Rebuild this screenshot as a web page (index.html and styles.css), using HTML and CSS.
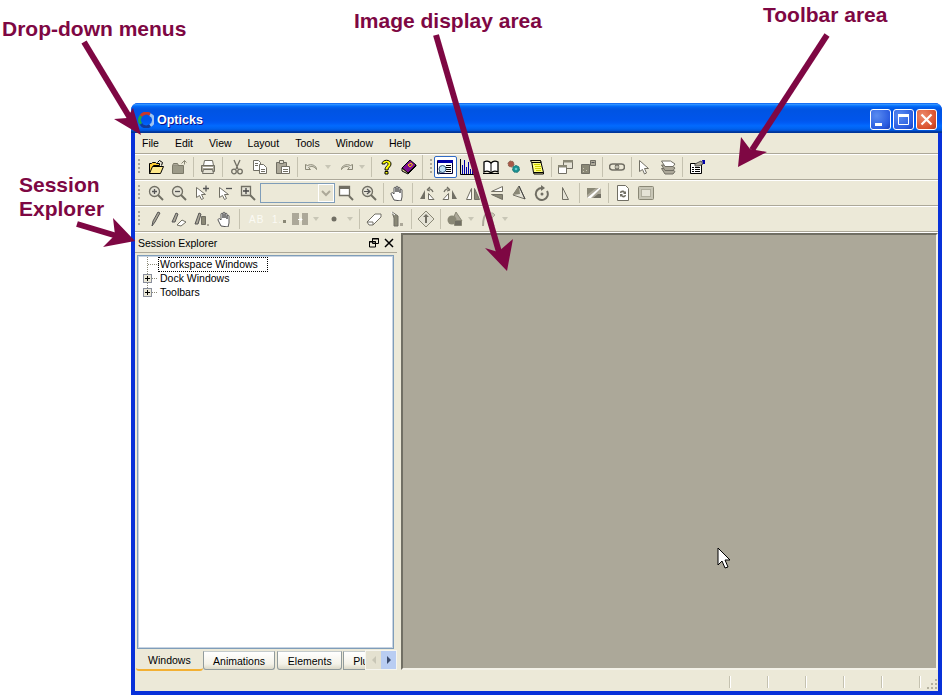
FILE: index.html
```html
<!DOCTYPE html>
<html lang="en">
<head>
    <meta charset="UTF-8">
    <title>Opticks</title>
    <link rel="stylesheet" href="styles.css">
</head>
<body>
    <!-- icon set -->
    <svg class="defs" width="0" height="0">
        <symbol id="i-open" viewBox="0 0 16 16"><path d="M1.500 14.500v-10h2l1-1h3l1 1h3v2h-6l-2 8z" fill="#fc3" stroke="#000"/><path d="M1.500 14.500l3-7h11l-3 7z" fill="#ffe98a" stroke="#000"/><path d="M9.500 3.500l2-2 3 2-1 3" fill="none" stroke="#000"/></symbol>
        <symbol id="i-folder" viewBox="0 0 16 16"><path d="M1.500 6.500h11v8h-11z" fill="#9c9a88" stroke="#7b7968"/><path d="M1.500 6.500l1-2h4l1 2" fill="#aca899" stroke="#7b7968"/><path d="M10.500 4.500l3-3 2 2M13.500 1.500v4" fill="none" stroke="#8a8876"/></symbol>
        <symbol id="i-print" viewBox="0 0 16 16"><path d="M4.500 1.500h8l1 5h-10z" fill="#fff" stroke="#716f64"/><path d="M1.500 6.500h13v6h-13z" fill="#aca899" stroke="#716f64"/><path d="M3.500 10.500l-1 4h11l-1-4z" fill="#e5e3d6" stroke="#716f64"/><path d="M3 8.500h10" stroke="#fff"/></symbol>
        <symbol id="i-cut" viewBox="0 0 16 16"><path d="M5 1l4 9M11 1l-4 9" stroke="#716f64" stroke-width="1.300" fill="none"/><circle cx="5" cy="12.500" r="2.300" fill="none" stroke="#716f64" stroke-width="1.300"/><circle cx="11" cy="12.500" r="2.300" fill="none" stroke="#716f64" stroke-width="1.300"/></symbol>
        <symbol id="i-copy" viewBox="0 0 16 16"><path d="M1.500 1.500h5l2 2v8h-7z" fill="#fff" stroke="#716f64"/><path d="M7.500 5.500h4l3 3v6h-7z" fill="#fff" stroke="#716f64"/><path d="M3 4.500h3M3 6.500h3M9 10.500h4M9 12.500h4" stroke="#716f64"/></symbol>
        <symbol id="i-paste" viewBox="0 0 16 16"><path d="M1.500 3.500h10v11h-10z" fill="#aca899" stroke="#716f64"/><path d="M4.500 1.500h4v3h-4z" fill="#e5e3d6" stroke="#716f64"/><path d="M6.500 7.500h8v7h-8z" fill="#fff" stroke="#716f64"/><path d="M8 10.500h5M8 12.500h5" stroke="#716f64"/></symbol>
        <symbol id="i-undo" viewBox="0 0 16 16"><path d="M1.500 5.500v5h5l-2-2c3-2 6-1 8 2 0-4-5-6-9-4z" fill="#e5e3d6" stroke="#8a8876"/></symbol>
        <symbol id="i-redo" viewBox="0 0 16 16"><path d="M14.500 5.500v5h-5l2-2c-3-2-6-1-8 2 0-4 5-6 9-4z" fill="#e5e3d6" stroke="#8a8876"/></symbol>
        <symbol id="i-help" viewBox="0 0 16 16"><path d="M4 5c0-5 9-5 9 0 0 3-3 3-3 6H7c0-4 3-4 3-6s-3-2-3 0z" fill="#ff0" stroke="#000"/><path d="M7 12.500h3v2.500H7z" fill="#ff0" stroke="#000"/></symbol>
        <symbol id="i-book" viewBox="0 0 16 16"><path d="M1 9l8-8 6 5-8 8z" fill="#7c1090" stroke="#000"/><path d="M1 9v3l6 3 8-8V6l-8 8z" fill="#e8d8a0" stroke="#000"/><path d="M7 6l3-2 1.500 2-2.500 2z" fill="none" stroke="#fc0"/></symbol>
        <symbol id="i-window" viewBox="0 0 16 16"><path d="M.5 1.500h15v13H.5z" fill="#fff" stroke="#003"/><path d="M1 1h15v3H1z" fill="#00a"/><path d="M9 6.500h5M9 8.500h5M9 10.500h5M9 12.500h5" stroke="#000"/><circle cx="5.500" cy="10" r="3.500" fill="#bfe0f5" stroke="#357"/><path d="M3 13l-2 2" stroke="#357" stroke-width="2"/></symbol>
        <symbol id="i-hist" viewBox="0 0 16 16"><path d="M.5 0v15.500H16" fill="none" stroke="#000"/><path d="M2.500 15V6M4.500 15V1M6.500 15V8M8.500 15V3M10.500 15V10M12.500 15V7M14.500 15v-4" stroke="#00a"/></symbol>
        <symbol id="i-obook" viewBox="0 0 16 16"><path d="M8 4C6 2 3 2 1 3v10c2-1 5-1 7 1 2-2 5-2 7-1V3c-2-1-5-1-7 1z" fill="#fff" stroke="#000" stroke-width="1.300"/><path d="M8 4v10M0 14.500h16" stroke="#000"/></symbol>
        <symbol id="i-gears" viewBox="0 0 16 16"><circle cx="5" cy="5" r="3" fill="#a85848" stroke="#865" stroke-dasharray="2 1"/><circle cx="10" cy="10" r="3.500" fill="#189090" stroke="#377" stroke-dasharray="2 1"/><circle cx="10" cy="10" r="1.300" fill="#6cc"/></symbol>
        <symbol id="i-scroll" viewBox="0 0 16 16"><path d="M2.500 1.500h9l3 12h-10z" fill="#ffff80" stroke="#000"/><path d="M1.500 1.500h10l.5 2h-9.500zM4.500 13.500h10v1.500h-9.500z" fill="#e8e0a0" stroke="#000"/><path d="M5 5.500h6M6 7.500h6M6 9.500h6M7 11.500h5" stroke="#cc0"/></symbol>
        <symbol id="i-cascade" viewBox="0 0 16 16"><path d="M6.500 1.500h9v8h-9z" fill="#e5e3d6" stroke="#716f64"/><path d="M6 1h10v2.500H6z" fill="#8a8876"/><path d="M1.500 6.500h8v8h-8z" fill="#fff" stroke="#716f64"/><path d="M1 6h9v2.500H1z" fill="#8a8876"/></symbol>
        <symbol id="i-tile" viewBox="0 0 16 16"><path d="M1.500 5.500h8v9h-8z" fill="#8a8876" stroke="#716f64"/><path d="M10.500 1.500h5v5h-5z" fill="#aca899" stroke="#716f64"/><path d="M11.500 3.500h3" stroke="#555"/><path d="M3 9.500h1M6 11.500h1M3 12.500h1" stroke="#c8c6b6"/></symbol>
        <symbol id="i-link" viewBox="0 0 16 16"><rect x="0.500" y="5" width="9" height="6" rx="3" fill="none" stroke="#716f64" stroke-width="1.500"/><rect x="6.500" y="5" width="9" height="6" rx="3" fill="none" stroke="#716f64" stroke-width="1.500"/><path d="M5 8h6" stroke="#c8c6b6"/></symbol>
        <symbol id="i-cursor" viewBox="0 0 16 16"><path d="M2.500 1.500v11l3-2 2 4.500 2-1-2-4.500h4z" fill="#fff" stroke="#716f64"/></symbol>
        <symbol id="i-layers" viewBox="0 0 16 16"><path d="M1.500 9.500h9l4.500 3-2 2.500h-8z" fill="#aca899" stroke="#716f64"/><path d="M1.500 6h9l4.500 3-2 2.500h-8z" fill="#aca899" stroke="#716f64"/><path d="M1.500 2h9l4.500 3-2 2.500h-8z" fill="#fff" stroke="#716f64"/></symbol>
        <symbol id="i-props" viewBox="0 0 16 16"><path d="M1.500 4.500h11v10h-11z" fill="#fff" stroke="#000"/><path d="M3 8.500h2M6 8.500h5M3 10.500h2M6 10.500h5M3 12.500h2M6 12.500h5" stroke="#000"/><path d="M6 5l6-3 2 3-4 2H6z" fill="#aca899" stroke="#555"/><path d="M13 1h3v4h-2z" fill="#00a"/></symbol>
        <symbol id="i-zin" viewBox="0 0 16 16"><circle cx="6.500" cy="6.500" r="5" fill="#e5e3d6" stroke="#716f64" stroke-width="1.300"/><path d="M4 6.500h5M6.500 4v5" stroke="#555" stroke-width="1.300"/><path d="M10 10l5 5" stroke="#716f64" stroke-width="2"/></symbol>
        <symbol id="i-zout" viewBox="0 0 16 16"><circle cx="6.500" cy="6.500" r="5" fill="#e5e3d6" stroke="#716f64" stroke-width="1.300"/><path d="M4 6.500h5" stroke="#555" stroke-width="1.300"/><path d="M10 10l5 5" stroke="#716f64" stroke-width="2"/></symbol>
        <symbol id="i-cplus" viewBox="0 0 16 16"><path d="M2.500 2.500v10l3-2 2 4 2-1-2-4h4z" fill="#fff" stroke="#716f64"/><path d="M9 3.500h6M12 .5v6" stroke="#555" stroke-width="1.300"/></symbol>
        <symbol id="i-cminus" viewBox="0 0 16 16"><path d="M2.500 2.500v10l3-2 2 4 2-1-2-4h4z" fill="#fff" stroke="#716f64"/><path d="M9 3.500h6" stroke="#555" stroke-width="1.300"/></symbol>
        <symbol id="i-zbox" viewBox="0 0 16 16"><path d="M1.500 1.500h9v9h-9z" fill="#e5e3d6" stroke="#716f64" stroke-width="1.300"/><path d="M3 6h6M6 3v6" stroke="#444" stroke-width="1.300"/><path d="M10 10l5 5" stroke="#716f64" stroke-width="2"/></symbol>
        <symbol id="i-zfit" viewBox="0 0 16 16"><path d="M1.500 1.500h10v9h-10z" fill="#fff" stroke="#716f64" stroke-width="1.300"/><path d="M1 1h11v3H1z" fill="#716f64"/><path d="M11 11l4 4" stroke="#716f64" stroke-width="2"/></symbol>
        <symbol id="i-zorig" viewBox="0 0 16 16"><circle cx="6.500" cy="6.500" r="5" fill="#e5e3d6" stroke="#716f64" stroke-width="1.300"/><path d="M3 6.500h6M6 4l3 2.500L6 9" fill="none" stroke="#555" stroke-width="1.200"/><path d="M10 10l5 5" stroke="#716f64" stroke-width="2"/></symbol>
        <symbol id="i-hand" viewBox="0 0 16 16"><path d="M4 15L1 9c0-1 1-2 2-1l1 1V3c0-1 2-1 2 0v4-5c0-1 2-1 2 0v5-4c0-1 2-1 2 0v5-3c0-1 2-1 2 0v7l-1 4z" fill="#fff" stroke="#555"/></symbol>
        <symbol id="i-rotl" viewBox="0 0 16 16"><path d="M1 14l5-9v9z" fill="#716f64"/><path d="M9.500 14.500v-6l5.500 6z" fill="#fff" stroke="#716f64"/><path d="M8 5c2-2 5-1 6 2M8 5l3-3M8 5l3 1" fill="none" stroke="#716f64" stroke-width="1.200"/></symbol>
        <symbol id="i-rotr" viewBox="0 0 16 16"><path d="M15 14l-5-9v9z" fill="#716f64"/><path d="M6.500 14.500v-6l-5.500 6z" fill="#fff" stroke="#716f64"/><path d="M8 5C6 3 3 4 2 7M8 5L5 2M8 5L5 6" fill="none" stroke="#716f64" stroke-width="1.200"/></symbol>
        <symbol id="i-fliph" viewBox="0 0 16 16"><path d="M1.500 14.500l5-11v11z" fill="#fff" stroke="#716f64"/><path d="M14.500 14.500l-5-11v11z" fill="#8a8876" stroke="#716f64"/></symbol>
        <symbol id="i-flipv" viewBox="0 0 16 16"><path d="M14.500 1.500l-11 5h11z" fill="#fff" stroke="#716f64"/><path d="M14.500 14.500l-11-5h11z" fill="#8a8876" stroke="#716f64"/></symbol>
        <symbol id="i-skew" viewBox="0 0 16 16"><path d="M8 1l-6 9 12 4z" fill="#e5e3d6" stroke="#716f64"/><path d="M8 1l-6 9 7-1z" fill="#8a8876"/><path d="M8 1l6 13" stroke="#444" fill="none"/></symbol>
        <symbol id="i-rot" viewBox="0 0 16 16"><path d="M8 3a6 6 0 1 0 5 3" fill="none" stroke="#716f64" stroke-width="2"/><path d="M7 0l4 3-4 3z" fill="#716f64"/><circle cx="8" cy="9" r="1.500" fill="#716f64"/></symbol>
        <symbol id="i-tri" viewBox="0 0 16 16"><path d="M5.500 2.500v12h6z" fill="#e5e3d6" stroke="#716f64"/></symbol>
        <symbol id="i-grad" viewBox="0 0 16 16"><path d="M1 3h14v10H1z" fill="#aca899"/><path d="M1 3h9L1 10z" fill="#8a8876"/><path d="M1 13L13 3h2L5 13z" fill="#fff"/><path d="M7 13h8V9h-3z" fill="#716f64"/></symbol>
        <symbol id="i-sync" viewBox="0 0 16 16"><path d="M2.500 .5h8l3 3v12h-11z" fill="#fff" stroke="#716f64"/><path d="M5 8c0-3 4-3 5-1l1-1v3H8l1-1c-1-1-2-1-3 0zM11 10c0 3-4 3-5 1l-1 1V9h3l-1 1c1 1 2 1 3 0z" fill="#716f64"/></symbol>
        <symbol id="i-frame" viewBox="0 0 16 16"><rect x="0.500" y="1.500" width="15" height="13" rx="1" fill="#c8c6b6" stroke="#8a8876"/><path d="M3.500 4.500h9v7h-9z" fill="#e5e3d6" stroke="#8a8876" stroke-dasharray="1 1"/></symbol>
        <symbol id="i-pen" viewBox="0 0 16 16"><path d="M4 15l1-5 5-9 2 1-5 9z" fill="#aca899" stroke="#555"/></symbol>
        <symbol id="i-pen2" viewBox="0 0 16 16"><path d="M1 11L5 2l2 1-3 8z" fill="#aca899" stroke="#555"/><path d="M6 14l5-5 4 2-5 4z" fill="#fff" stroke="#716f64"/></symbol>
        <symbol id="i-pen3" viewBox="0 0 16 16"><path d="M1 13L5 2l2 1-3 10z" fill="#aca899" stroke="#555"/><path d="M7.500 5.500h4v8h-4z" fill="#8a8876" stroke="#716f64"/><path d="M13 13h2v2h-2z" fill="#aca899"/></symbol>
        <symbol id="i-split" viewBox="0 0 16 16"><path d="M0 2h7v12H0z" fill="#aca899"/><path d="M10 2h6v12h-6z" fill="#aca899"/><path d="M6 8.500h4M8 6.500l2 2-2 2" fill="none" stroke="#fff"/></symbol>
        <symbol id="i-dot" viewBox="0 0 16 16"><circle cx="8" cy="8" r="2.500" fill="#716f64"/></symbol>
        <symbol id="i-eraser" viewBox="0 0 16 16"><path d="M1 11l8-8h6v3l-8 8H3z" fill="#fff" stroke="#716f64"/><path d="M1 11h6v3" fill="none" stroke="#716f64"/></symbol>
        <symbol id="i-stamp" viewBox="0 0 16 16"><path d="M3 1l6 4v10H5V7z" fill="#8a8876" stroke="#716f64"/><path d="M2 1l4 3" stroke="#fff"/><path d="M11 12h3v3h-3z" fill="#aca899"/></symbol>
        <symbol id="i-diamond" viewBox="0 0 16 16"><path d="M8 0l8 8-8 8-8-8z" fill="#e5e3d6" stroke="#8a8876"/><path d="M8 3l3 3H9v6H7V6H5z" fill="#716f64"/></symbol>
        <symbol id="i-shapes" viewBox="0 0 16 16"><path d="M9 1l6 9H5z" fill="#aca899" stroke="#8a8876"/><circle cx="5" cy="9" r="4.500" fill="#8a8876"/><path d="M7.500 9.500h7v5h-7z" fill="#716f64" stroke="#8a8876"/></symbol>
        <symbol id="i-line" viewBox="0 0 16 16"><path d="M2 15c0-6 1-11 4-13" fill="none" stroke="#aca899" stroke-width="2"/><path d="M6 2h6l2 2-3 3 2 8H8z" fill="#c8c6b6" stroke="#aca899"/></symbol>
    </svg>

    <div class="window">
        <div class="titlebar">
            <svg class="logo" width="16" height="16" viewBox="0 0 16 16">
                <path d="M3 12A6 6 0 0 1 3 4" fill="none" stroke="#1fa84a" stroke-width="3"/>
                <path d="M3 4A6 6 0 0 1 12 2.500" fill="none" stroke="#c8382a" stroke-width="3"/>
                <path d="M12 2.500A6 6 0 0 1 12 13.500" fill="none" stroke="#9fc4f0" stroke-width="3"/>
                <path d="M12 13.500A6 6 0 0 1 3 12" fill="none" stroke="#123a9a" stroke-width="3"/>
            </svg>
            <span class="title">Opticks</span>
            <div class="winbtn">
                <svg width="21" height="21" viewBox="0 0 21 21"><path d="M5 14h7v3H5z" fill="#fff"/></svg>
            </div>
            <div class="winbtn">
                <svg width="21" height="21" viewBox="0 0 21 21"><path d="M5.500 5.500h10v10h-10z" fill="none" stroke="#fff"/><path d="M5 5h11v3H5z" fill="#fff"/></svg>
            </div>
            <div class="winbtn winbtn-close">
                <svg width="21" height="21" viewBox="0 0 21 21"><path d="M5.500 5.500l10 10M15.500 5.500l-10 10" stroke="#fff" stroke-width="2.200"/></svg>
            </div>
        </div>

        <div class="inner">
            <div class="menubar">
                <span>File</span><span>Edit</span><span>View</span><span>Layout</span><span>Tools</span><span>Window</span><span>Help</span>
            </div>

            <div class="toolbar">
                <i class="grip"></i>
                <b class="btn"><svg><use href="#i-open"/></svg></b>
                <b class="btn"><svg><use href="#i-folder"/></svg></b>
                <i class="sep"></i>
                <b class="btn"><svg><use href="#i-print"/></svg></b>
                <i class="sep"></i>
                <b class="btn"><svg><use href="#i-cut"/></svg></b>
                <b class="btn"><svg><use href="#i-copy"/></svg></b>
                <b class="btn"><svg><use href="#i-paste"/></svg></b>
                <i class="sep"></i>
                <b class="btn"><svg><use href="#i-undo"/></svg></b><i class="drop"></i>
                <b class="btn"><svg><use href="#i-redo"/></svg></b><i class="drop"></i>
                <i class="sep"></i>
                <b class="btn"><svg><use href="#i-help"/></svg></b>
                <b class="btn"><svg><use href="#i-book"/></svg></b>
                <i class="sep sep-group"></i>
                <i class="grip grip-mid"></i>
                <b class="btn btn-on"><svg><use href="#i-window"/></svg></b>
                <b class="btn"><svg><use href="#i-hist"/></svg></b>
                <b class="btn"><svg><use href="#i-obook"/></svg></b>
                <b class="btn"><svg><use href="#i-gears"/></svg></b>
                <b class="btn"><svg><use href="#i-scroll"/></svg></b>
                <i class="sep sep-thin"></i>
                <b class="btn"><svg><use href="#i-cascade"/></svg></b>
                <b class="btn"><svg><use href="#i-tile"/></svg></b>
                <i class="sep"></i>
                <b class="btn"><svg><use href="#i-link"/></svg></b>
                <i class="sep sep-thin"></i>
                <b class="btn"><svg><use href="#i-cursor"/></svg></b>
                <b class="btn"><svg><use href="#i-layers"/></svg></b>
                <i class="sep"></i>
                <b class="btn"><svg><use href="#i-props"/></svg></b>
            </div>

            <div class="toolbar">
                <i class="grip"></i>
                <b class="btn"><svg><use href="#i-zin"/></svg></b>
                <b class="btn"><svg><use href="#i-zout"/></svg></b>
                <b class="btn"><svg><use href="#i-cplus"/></svg></b>
                <b class="btn"><svg><use href="#i-cminus"/></svg></b>
                <b class="btn"><svg><use href="#i-zbox"/></svg></b>
                <div class="combo"><span class="combo-arrow"><svg width="14" height="16" viewBox="0 0 14 16"><path d="M3 6l4 4 4-4" fill="none" stroke="#aca899" stroke-width="2"/></svg></span></div>
                <b class="btn"><svg><use href="#i-zfit"/></svg></b>
                <b class="btn"><svg><use href="#i-zorig"/></svg></b>
                <i class="sep"></i>
                <b class="btn"><svg><use href="#i-hand"/></svg></b>
                <i class="sep"></i>
                <b class="btn"><svg><use href="#i-rotl"/></svg></b>
                <b class="btn"><svg><use href="#i-rotr"/></svg></b>
                <b class="btn"><svg><use href="#i-fliph"/></svg></b>
                <b class="btn"><svg><use href="#i-flipv"/></svg></b>
                <b class="btn"><svg><use href="#i-skew"/></svg></b>
                <b class="btn"><svg><use href="#i-rot"/></svg></b>
                <b class="btn"><svg><use href="#i-tri"/></svg></b>
                <i class="sep"></i>
                <b class="btn"><svg><use href="#i-grad"/></svg></b>
                <i class="sep"></i>
                <b class="btn"><svg><use href="#i-sync"/></svg></b>
                <b class="btn"><svg><use href="#i-frame"/></svg></b>
            </div>

            <div class="toolbar">
                <i class="grip"></i>
                <b class="btn"><svg><use href="#i-pen"/></svg></b>
                <b class="btn"><svg><use href="#i-pen2"/></svg></b>
                <b class="btn"><svg><use href="#i-pen3"/></svg></b>
                <b class="btn"><svg><use href="#i-hand"/></svg></b>
                <i class="sep"></i>
                <b class="btn btn-text">AB</b>
                <b class="btn btn-text btn-num">1.</b>
                <b class="btn"><svg><use href="#i-split"/></svg></b><i class="drop"></i>
                <b class="btn"><svg><use href="#i-dot"/></svg></b><i class="drop"></i>
                <i class="sep"></i>
                <b class="btn"><svg><use href="#i-eraser"/></svg></b>
                <b class="btn"><svg><use href="#i-stamp"/></svg></b>
                <i class="sep"></i>
                <b class="btn"><svg><use href="#i-diamond"/></svg></b>
                <i class="sep"></i>
                <b class="btn"><svg><use href="#i-shapes"/></svg></b><i class="drop"></i>
                <b class="btn"><svg><use href="#i-line"/></svg></b><i class="drop"></i>
            </div>

            <div class="main">
                <div class="dock">
                    <div class="dock-head">
                        <span>Session Explorer</span>
                        <svg width="10" height="10" viewBox="0 0 10 10"><path d="M3.500 .5h6v5h-6zM.5 3.500h6v5.500h-6z" fill="#ece9d8" stroke="#000"/><path d="M3 1h7M0 4h7" stroke="#000"/></svg>
                        <svg width="10" height="10" viewBox="0 0 10 10"><path d="M1 1l8 8M9 1l-8 8" stroke="#000" stroke-width="1.500"/></svg>
                    </div>
                    <div class="tree">
                        <div class="tree-row">
                            <svg class="twig" width="21" height="14" viewBox="0 0 21 14"><path d="M9.500 0v14M10 7.500h11" stroke="#8a8876" stroke-dasharray="1 1"/></svg>
                            <span class="tree-focus">Workspace Windows</span>
                        </div>
                        <div class="tree-row">
                            <svg class="twig" width="21" height="14" viewBox="0 0 21 14"><path d="M9.500 0v14M10 7.500h9" stroke="#8a8876" stroke-dasharray="1 1"/><rect x="5.500" y="3.500" width="8" height="8" fill="#ece9d8" stroke="#8a8f9c"/><path d="M7 7.500h5M9.500 5v5" stroke="#000"/></svg>
                            <span class="tree-label">Dock Windows</span>
                        </div>
                        <div class="tree-row">
                            <svg class="twig" width="21" height="14" viewBox="0 0 21 14"><path d="M9.500 0v4M10 7.500h9" stroke="#8a8876" stroke-dasharray="1 1"/><rect x="5.500" y="3.500" width="8" height="8" fill="#ece9d8" stroke="#8a8f9c"/><path d="M7 7.500h5M9.500 5v5" stroke="#000"/></svg>
                            <span class="tree-label">Toolbars</span>
                        </div>
                    </div>
                    <div class="tabs">
                        <span class="tab tab-on">Windows</span>
                        <span class="tab tab-anim">Animations</span>
                        <span class="tab tab-elem">Elements</span>
                        <span class="tab tab-cut">Plu</span>
                        <div class="tab-scroll">
                            <span class="tab-arrow"><svg width="6" height="10" viewBox="0 0 6 10"><path d="M5 1v8L1 5z" fill="#c8c6b6"/></svg></span>
                            <span class="tab-arrow tab-arrow-on"><svg width="6" height="10" viewBox="0 0 6 10"><path d="M1 1v8l4-4z" fill="#3a4a6c"/></svg></span>
                        </div>
                    </div>
                </div>
                <div class="workspace"></div>
            </div>

            <div class="statusbar">
                <i class="cell"></i><i class="cell"></i><i class="cell"></i><i class="cell"></i><i class="cell"></i><i class="cell"></i>
                <svg class="size-grip" width="11" height="12" viewBox="0 0 11 12">
                    <path d="M8 1h2v2H8zM4 5h2v2H4zM8 5h2v2H8zM0 9h2v2H0zM4 9h2v2H4zM8 9h2v2H8z" fill="#b5b2a0"/>
                </svg>
            </div>
        </div>
    </div>

    <!-- mouse pointer in the image area -->
    <svg class="pointer" width="14" height="23" viewBox="0 0 14 23"><path d="M1 1v17l4-4 3 7 3-1-3-7h5z" fill="#fff" stroke="#000"/></svg>

    <!-- callouts -->
    <div class="callout callout-menus">Drop-down menus</div>
    <div class="callout callout-image">Image display area</div>
    <div class="callout callout-toolbar">Toolbar area</div>
    <div class="callout callout-session">Session<br>Explorer</div>
    <svg class="arrows" width="946" height="698" viewBox="0 0 946 698">
        <g fill="#7e0743" stroke="#7e0743">
            <path d="M84 42l46 76" stroke-width="6" fill="none"/>
            <path d="M141 135l-27-16 13-1 6-10z" stroke-width="0"/>
            <path d="M436 35l63 217" stroke-width="6" fill="none"/>
            <path d="M507 271l-22-23 13 4 15-13z" stroke-width="0"/>
            <path d="M827 35l-75 115" stroke-width="6" fill="none"/>
            <path d="M738 167l3-30 9 12 17 3z" stroke-width="0"/>
            <path d="M77 224l40 12" stroke-width="6" fill="none"/>
            <path d="M135 241l-32 6 12-12-2-17z" stroke-width="0"/>
        </g>
    </svg>
</body>
</html>
```

FILE: styles.css
```css
html, body {
    margin: 0;
    padding: 0;
    height: 100%;
    overflow: hidden;
    background: #fff;
}
body {
    font-family: "Liberation Sans", Arial, sans-serif;
    font-size: 10.500px;
    color: #000;
    padding: 103px 4px 0 131px;
    box-sizing: border-box;
}
.defs {
    position: absolute;
}
.window {
    width: 811px;
    height: 592px;
    display: flex;
    flex-direction: column;
    background: #0831d9;
    border-radius: 7px 7px 0 0;
}
.titlebar {
    height: 30px;
    flex: none;
    display: flex;
    align-items: center;
    padding: 3px 5px 0 7px;
    box-sizing: border-box;
    border-radius: 7px 7px 0 0;
    background: linear-gradient(#0058ee, #3593ff 4%, #288eff 6%, #127dff 8%, #036ffc 10%, #0262ee 14%, #0057e5 20%, #0054e3 24%, #0055eb 56%, #005bf5 66%, #026afe 76%, #0062ef 86%, #0052d6 92%, #0040ab 94%, #003092 100%);
}
.logo {
    margin-right: 3px;
}
.title {
    flex: 1;
    color: #fff;
    font-weight: bold;
    font-size: 12.500px;
    text-shadow: 1px 1px 0 #0f1089;
}
.winbtn {
    width: 21px;
    height: 21px;
    margin-left: 2px;
    box-sizing: border-box;
    border: 1px solid #fff;
    border-radius: 3px;
    background: radial-gradient(circle at 30% 30%, #5a8cf0, #2a5ce0 70%, #1b3fb8);
    display: flex;
    align-items: center;
    justify-content: center;
}
.winbtn svg {
    flex: none;
}
.winbtn-close {
    background: radial-gradient(circle at 30% 30%, #ec8a6c, #d9502c 70%, #b13a1a);
}
.inner {
    flex: 1;
    min-height: 0;
    margin: 0 4px 4px;
    background: #ece9d8;
    display: flex;
    flex-direction: column;
}
.menubar {
    height: 21px;
    flex: none;
    box-sizing: border-box;
    display: flex;
    align-items: center;
    gap: 16px;
    padding-left: 7px;
    border-bottom: 1px solid #aca899;
    font-size: 10.500px;
}
.toolbar {
    height: 26px;
    flex: none;
    box-sizing: border-box;
    display: flex;
    align-items: center;
    border-top: 1px solid #fff;
    border-bottom: 1px solid #aca899;
}
.grip {
    width: 10px;
    height: 16px;
    flex: none;
    box-sizing: border-box;
    margin-left: 3px;
    margin-right: -3px;
    background: radial-gradient(circle at 1px 1px, #aca899 1px, transparent 1px) 0 0 / 3px 4px repeat-y;
}
.grip-mid {
    width: 8px;
    margin-left: 0;
    margin-right: 0;
    background-position: 4px 0;
}
.btn {
    width: 23px;
    height: 22px;
    flex: none;
    box-sizing: border-box;
    display: flex;
    align-items: center;
    padding-left: 3px;
}
.btn svg {
    width: 16px;
    height: 16px;
}
.btn-on {
    background: #fff;
    border: 1px solid #316ac5;
    border-radius: 2px;
    padding-left: 2px;
}
.btn-text {
    color: #fbfaf4;
    font-size: 10px;
    font-weight: normal;
    letter-spacing: 1px;
    padding-left: 6px;
    gap: 1px;
}
.btn-num::after {
    content: "";
    width: 3px;
    height: 3px;
    margin-top: 4px;
    background: #8a8876;
}
.sep {
    width: 6px;
    height: 20px;
    flex: none;
    box-sizing: border-box;
    border-right: 3px solid transparent;
    border-left: 2px solid transparent;
    background: #c5c2b0;
    background-clip: content-box;
}
.sep-thin {
    width: 5px;
    border-right-width: 2px;
}
.sep-group {
    width: 5px;
    height: 24px;
    border-left: 1px solid transparent;
}
.drop {
    width: 11px;
    height: 22px;
    flex: none;
    position: relative;
}
.drop::after {
    content: "";
    position: absolute;
    left: 1px;
    top: 9px;
    border-left: 3.500px solid transparent;
    border-right: 3.500px solid transparent;
    border-top: 4px solid #c8c6b6;
}
.combo {
    width: 75px;
    height: 20px;
    flex: none;
    box-sizing: border-box;
    border: 1px solid #7f9db9;
    display: flex;
    justify-content: flex-end;
    background: #ece9d8;
}
.combo-arrow {
    width: 16px;
    box-sizing: border-box;
    border: 1px solid #fff;
    display: flex;
    align-items: center;
    justify-content: center;
    background: #e8e5d4;
}
.main {
    flex: 1;
    min-height: 0;
    display: flex;
    border-top: 1px solid #fff;
}
.dock {
    width: 262px;
    flex: none;
    display: flex;
    flex-direction: column;
}
.dock-head {
    height: 20px;
    flex: none;
    display: flex;
    align-items: center;
    gap: 5px;
    padding: 0 3px 0 3px;
    box-sizing: border-box;
    border-bottom: 1px solid #aca899;
}
.dock-head span {
    flex: 1;
}
.tree {
    flex: 1;
    min-height: 0;
    margin: 2px 3px 1px 2px;
    padding-top: 1px;
    background: #fff;
    border: 1px solid #7f9db9;
    box-shadow: inset 0 0 0 1px #c8d4e2;
}
.tree-row {
    height: 14px;
    display: flex;
    align-items: center;
}
.twig {
    flex: none;
}
.tree-focus {
    padding: 0 9px 0 1px;
    line-height: 13px;
    outline: 1px dotted #000;
}
.tree-label {
    padding-left: 1px;
}
.tabs {
    height: 21px;
    flex: none;
    display: flex;
    padding-left: 1px;
}
.tab {
    box-sizing: border-box;
    text-align: center;
    line-height: 19px;
    height: 19px;
    background: linear-gradient(#fff, #f4f2e8 70%, #dcd9c8);
    border: 1px solid #919b9c;
    border-top-color: #c4cbcc;
    border-radius: 0 0 3px 3px;
    margin-top: 1px;
}
.tab-on {
    width: 67px;
    height: 21px;
    background: #ece9d8;
    border: none;
    border-bottom: 2px solid #f3b033;
    border-radius: 0 0 3px 3px;
    margin-top: 0;
    line-height: 20px;
}
.tab-anim {
    width: 73px;
    margin-right: 1px;
}
.tab-elem {
    width: 65px;
    margin-left: 1px;
}
.tab-cut {
    width: 22px;
    margin-left: 1px;
    text-align: left;
    padding-left: 9px;
    white-space: nowrap;
    border-right: none;
    border-radius: 0;
}
.tab-scroll {
    width: 32px;
    height: 20px;
    box-sizing: border-box;
    display: flex;
    border: 1px solid #f6f5ee;
    background: #e4e1d0;
    position: relative;
}
.tab-arrow {
    flex: 1;
    display: flex;
    align-items: center;
    justify-content: center;
}
.tab-arrow-on {
    background: #b9cdf2;
}
.workspace {
    flex: 1;
    margin: 0 0 1px 4px;
    background: #aca899;
    border-left: 2px solid #716f64;
    border-top: 2px solid #716f64;
    border-right: 2px solid #f4f2e8;
    border-bottom: 2px solid #f4f2e8;
}
.statusbar {
    height: 20px;
    flex: none;
    box-sizing: border-box;
    display: flex;
    justify-content: flex-end;
    align-items: center;
    padding-top: 1px;
}
.cell {
    width: 38px;
    height: 12px;
    flex: none;
    box-sizing: border-box;
    border-left: 1px solid #c5c2b0;
    box-shadow: inset 1px 0 0 #fff;
}
.cell:last-of-type {
    width: 8px;
}
.size-grip {
    align-self: flex-end;
    margin-bottom: 1px;
    flex: none;
}
.pointer {
    position: absolute;
    left: 717px;
    top: 547px;
}
.callout {
    position: absolute;
    color: #7e0743;
    font-size: 21px;
    font-weight: bold;
    line-height: 24px;
    white-space: nowrap;
}
.callout-menus {
    left: 2px;
    top: 17px;
}
.callout-image {
    left: 354px;
    top: 9px;
}
.callout-toolbar {
    left: 763px;
    top: 3px;
}
.callout-session {
    left: 19px;
    top: 173px;
}
.arrows {
    position: absolute;
    left: 0;
    top: 0;
}
```
